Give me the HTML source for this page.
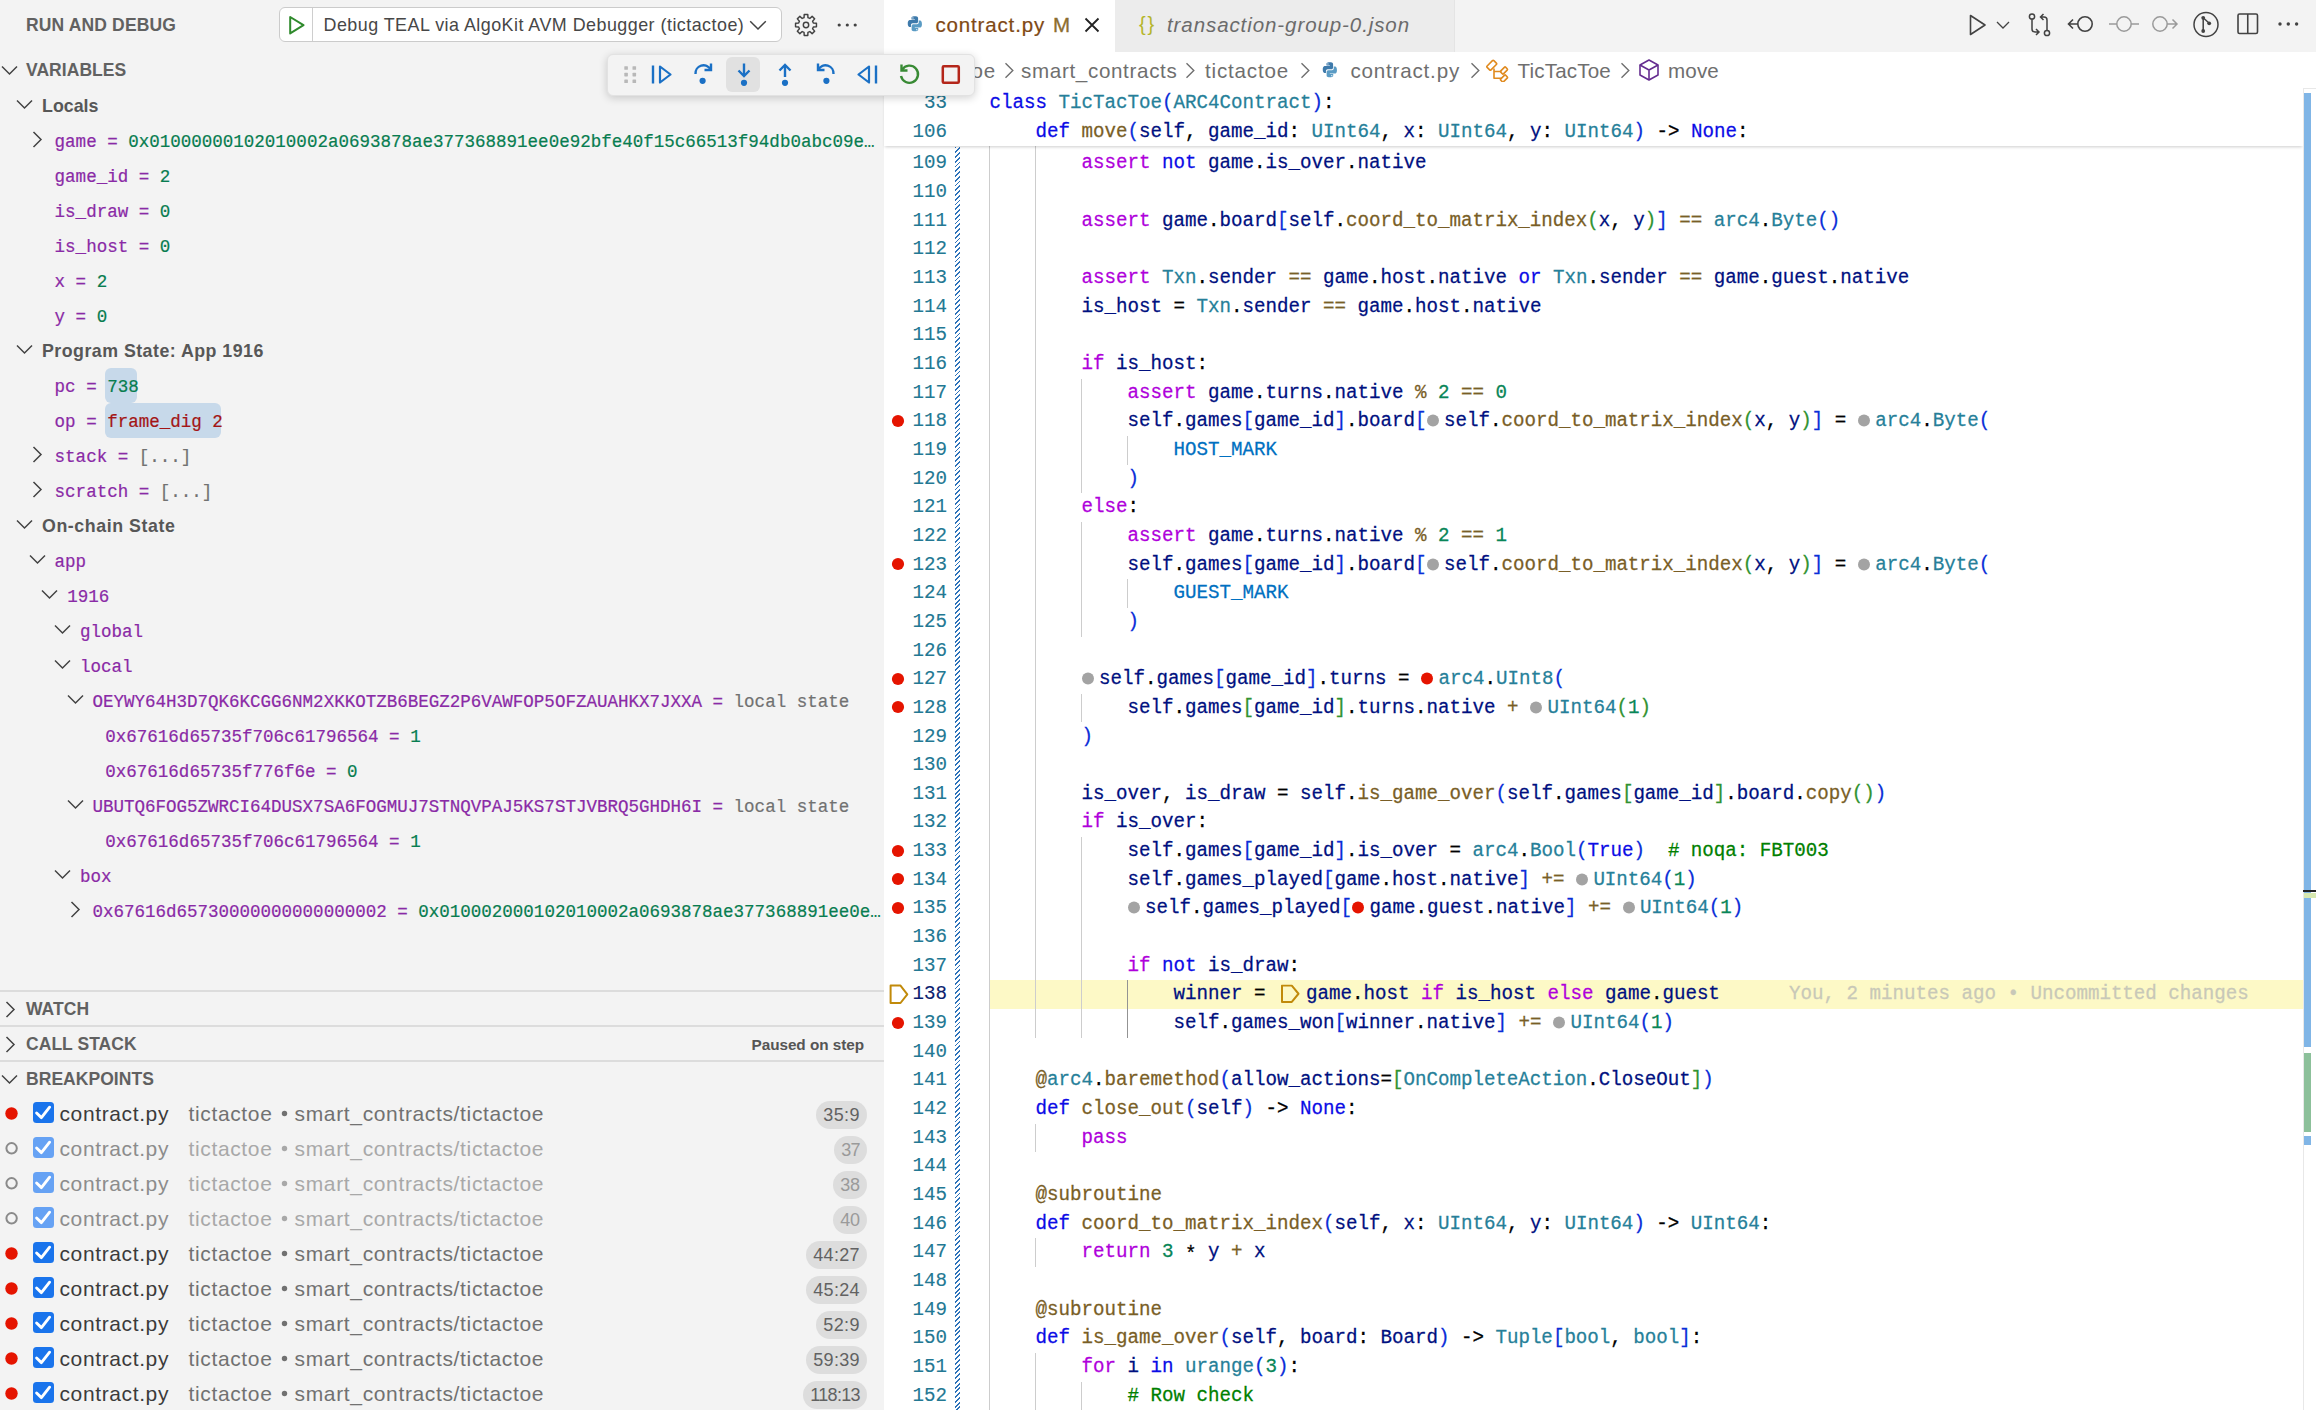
<!DOCTYPE html>
<html><head><meta charset="utf-8"><title>VS Code</title>
<style>
html,body{margin:0;padding:0;width:2316px;height:1410px;overflow:hidden;background:#fff}
.t,.b{position:absolute;white-space:pre;}
.t{margin:0}
.fs{font-family:"Liberation Sans", sans-serif}
.fm{font-family:"Liberation Mono", monospace;-webkit-text-stroke:0.2px currentColor}
.cl{-webkit-text-stroke:0.25px currentColor;position:absolute;white-space:pre;font-family:"Liberation Mono", monospace;font-size:19.17px;line-height:28.66px;height:28.66px;color:#000;transform:scaleY(1.1);transform-origin:0 19.43px}
.ln{-webkit-text-stroke:0.12px currentColor;position:absolute;white-space:pre;font-family:"Liberation Mono", monospace;font-size:19.17px;line-height:28.66px;height:28.66px;left:867px;width:80px;text-align:right;transform:scaleY(1.1);transform-origin:0 19.43px}
.cl .bpd::before{transform:scaleY(0.9091)}
.cl .frm svg{transform:scaleY(0.9091)}
.bpd{display:inline-block;width:17.5px;height:12px;position:relative;vertical-align:-1px}
.bpd::before{content:"";position:absolute;left:0.5px;top:0;width:12px;height:12px;border-radius:50%;background:#a3a3a3}
.bpd.r::before{background:#e51400}
.frm{display:inline-block;width:29px;height:20px;vertical-align:-4px;position:relative}
.frm svg{position:absolute;left:4px;top:1.5px}
</style></head><body>
<div class="b" style="left:0.00px;top:0.00px;width:884.00px;height:1410.00px;background:#f3f3f3"></div>
<div class="t fs " style="left:26.00px;top:12.64px;font-size:17.5px;line-height:24px;color:#616161;font-weight:bold;font-style:normal;letter-spacing:0.15px;">RUN AND DEBUG</div>
<div class="b" style="left:279.00px;top:7.00px;width:502.50px;height:35.00px;background:#fff;border:1.5px solid #cbcbcb;border-radius:6px;box-sizing:border-box"></div>
<div class="b" style="left:312.00px;top:8.00px;width:1.30px;height:33.00px;background:#cecece"></div>
<svg class="b" style="left:287.00px;top:14.00px;" width="20" height="22" viewBox="0 0 20 22"><path d="M3.2 3 L16.5 11.2 L3.2 19.4 Z" fill="none" stroke="#2f8a2c" stroke-width="2" stroke-linejoin="round"/></svg>
<div class="t fs " style="left:323.50px;top:13.30px;font-size:17.9px;line-height:25px;color:#474747;font-weight:normal;font-style:normal;letter-spacing:0.475px;">Debug TEAL via AlgoKit AVM Debugger (tictactoe)</div>
<svg class="b" style="left:748.00px;top:17.00px;" width="20" height="14" viewBox="0 0 20 14"><path d="M2.2 4.2 L10 12 L17.8 4.2" fill="none" stroke="#424242" stroke-width="1.5"/></svg>
<svg class="b" style="left:793.00px;top:11.50px;" width="26" height="26" viewBox="0 0 26 26"><g fill="none" stroke="#424242" stroke-width="1.45" stroke-linejoin="round"><circle cx="13" cy="13" r="2.7"/><path d="M20.34 11.05 L23.45 11.21 L23.45 14.79 L20.34 14.95 L19.57 16.81 L21.66 19.12 L19.12 21.66 L16.81 19.57 L14.95 20.34 L14.79 23.45 L11.21 23.45 L11.05 20.34 L9.19 19.57 L6.88 21.66 L4.34 19.12 L6.43 16.81 L5.66 14.95 L2.55 14.79 L2.55 11.21 L5.66 11.05 L6.43 9.19 L4.34 6.88 L6.88 4.34 L9.19 6.43 L11.05 5.66 L11.21 2.55 L14.79 2.55 L14.95 5.66 L16.81 6.43 L19.12 4.34 L21.66 6.88 L19.57 9.19 Z"/></g></svg>
<svg class="b" style="left:835.00px;top:20.50px;" width="24" height="8" viewBox="0 0 24 8"><g fill="#424242"><circle cx="4.2" cy="4" r="1.6"/><circle cx="12.3" cy="4" r="1.6"/><circle cx="20.2" cy="4" r="1.6"/></g></svg>
<svg class="b" style="left:1.00px;top:65.00px;" width="17" height="11" viewBox="0 0 17 11"><path d="M1 1.5 L8.5 9 L16 1.5" fill="none" stroke="#424242" stroke-width="1.5"/></svg>
<div class="t fs " style="left:26.00px;top:57.94px;font-size:17.5px;line-height:24px;color:#616161;font-weight:bold;font-style:normal;letter-spacing:0.05px;">VARIABLES</div>
<svg class="b" style="left:15.50px;top:99.00px;" width="17" height="11" viewBox="0 0 17 11"><path d="M1 1.5 L8.5 9 L16 1.5" fill="none" stroke="#424242" stroke-width="1.5"/></svg>
<div class="t fs " style="left:42.00px;top:93.83px;font-size:17.8px;line-height:25px;color:#575757;font-weight:bold;font-style:normal;letter-spacing:0.018px;">Locals</div>
<svg class="b" style="left:32.00px;top:131.00px;" width="11" height="17" viewBox="0 0 11 17"><path d="M1.5 1 L9 8.5 L1.5 16" fill="none" stroke="#424242" stroke-width="1.5"/></svg>
<div class="t fm " style="left:54.60px;top:129.64px;font-size:17.53px;line-height:25px;color:#333;font-weight:normal;font-style:normal;letter-spacing:0px;width:828.40px;overflow:hidden;transform:scaleY(1.1);transform-origin:0 17.16px;"><span style="color:#8a2aa6">game</span><span style="color:#8a2aa6"> = </span><span style="color:#087d50">0x01000000102010002a0693878ae377368891ee0e92bfe40f15c66513f94db0abc09e…</span></div>
<div class="t fm " style="left:54.60px;top:164.64px;font-size:17.53px;line-height:25px;color:#333;font-weight:normal;font-style:normal;letter-spacing:0px;transform:scaleY(1.1);transform-origin:0 17.16px;"><span style="color:#8a2aa6">game_id</span><span style="color:#8a2aa6"> = </span><span style="color:#087d50">2</span></div>
<div class="t fm " style="left:54.60px;top:199.64px;font-size:17.53px;line-height:25px;color:#333;font-weight:normal;font-style:normal;letter-spacing:0px;transform:scaleY(1.1);transform-origin:0 17.16px;"><span style="color:#8a2aa6">is_draw</span><span style="color:#8a2aa6"> = </span><span style="color:#087d50">0</span></div>
<div class="t fm " style="left:54.60px;top:234.64px;font-size:17.53px;line-height:25px;color:#333;font-weight:normal;font-style:normal;letter-spacing:0px;transform:scaleY(1.1);transform-origin:0 17.16px;"><span style="color:#8a2aa6">is_host</span><span style="color:#8a2aa6"> = </span><span style="color:#087d50">0</span></div>
<div class="t fm " style="left:54.60px;top:269.64px;font-size:17.53px;line-height:25px;color:#333;font-weight:normal;font-style:normal;letter-spacing:0px;transform:scaleY(1.1);transform-origin:0 17.16px;"><span style="color:#8a2aa6">x</span><span style="color:#8a2aa6"> = </span><span style="color:#087d50">2</span></div>
<div class="t fm " style="left:54.60px;top:304.64px;font-size:17.53px;line-height:25px;color:#333;font-weight:normal;font-style:normal;letter-spacing:0px;transform:scaleY(1.1);transform-origin:0 17.16px;"><span style="color:#8a2aa6">y</span><span style="color:#8a2aa6"> = </span><span style="color:#087d50">0</span></div>
<svg class="b" style="left:15.50px;top:344.00px;" width="17" height="11" viewBox="0 0 17 11"><path d="M1 1.5 L8.5 9 L16 1.5" fill="none" stroke="#424242" stroke-width="1.5"/></svg>
<div class="t fs " style="left:42.00px;top:338.83px;font-size:17.8px;line-height:25px;color:#575757;font-weight:bold;font-style:normal;letter-spacing:0.477px;">Program State: App 1916</div>
<div class="b" style="left:105.00px;top:368.00px;width:32.00px;height:35.00px;background:#c7d9ea;border-radius:6px"></div>
<div class="t fm " style="left:54.60px;top:374.64px;font-size:17.53px;line-height:25px;color:#333;font-weight:normal;font-style:normal;letter-spacing:0px;transform:scaleY(1.1);transform-origin:0 17.16px;"><span style="color:#8a2aa6">pc</span><span style="color:#8a2aa6"> = </span><span style="color:#087d50">738</span></div>
<div class="b" style="left:105.00px;top:403.00px;width:116.00px;height:35.00px;background:#c7d9ea;border-radius:6px"></div>
<div class="t fm " style="left:54.60px;top:409.64px;font-size:17.53px;line-height:25px;color:#333;font-weight:normal;font-style:normal;letter-spacing:0px;transform:scaleY(1.1);transform-origin:0 17.16px;"><span style="color:#8a2aa6">op</span><span style="color:#8a2aa6"> = </span><span style="color:#a31515">frame_dig 2</span></div>
<svg class="b" style="left:32.00px;top:446.00px;" width="11" height="17" viewBox="0 0 11 17"><path d="M1.5 1 L9 8.5 L1.5 16" fill="none" stroke="#424242" stroke-width="1.5"/></svg>
<div class="t fm " style="left:54.60px;top:444.64px;font-size:17.53px;line-height:25px;color:#333;font-weight:normal;font-style:normal;letter-spacing:0px;transform:scaleY(1.1);transform-origin:0 17.16px;"><span style="color:#8a2aa6">stack</span><span style="color:#8a2aa6"> = </span><span style="color:#717171">[...]</span></div>
<svg class="b" style="left:32.00px;top:481.00px;" width="11" height="17" viewBox="0 0 11 17"><path d="M1.5 1 L9 8.5 L1.5 16" fill="none" stroke="#424242" stroke-width="1.5"/></svg>
<div class="t fm " style="left:54.60px;top:479.64px;font-size:17.53px;line-height:25px;color:#333;font-weight:normal;font-style:normal;letter-spacing:0px;transform:scaleY(1.1);transform-origin:0 17.16px;"><span style="color:#8a2aa6">scratch</span><span style="color:#8a2aa6"> = </span><span style="color:#717171">[...]</span></div>
<svg class="b" style="left:15.50px;top:519.00px;" width="17" height="11" viewBox="0 0 17 11"><path d="M1 1.5 L8.5 9 L16 1.5" fill="none" stroke="#424242" stroke-width="1.5"/></svg>
<div class="t fs " style="left:42.00px;top:513.83px;font-size:17.8px;line-height:25px;color:#575757;font-weight:bold;font-style:normal;letter-spacing:0.563px;">On-chain State</div>
<svg class="b" style="left:28.50px;top:554.00px;" width="17" height="11" viewBox="0 0 17 11"><path d="M1 1.5 L8.5 9 L16 1.5" fill="none" stroke="#424242" stroke-width="1.5"/></svg>
<div class="t fm " style="left:54.60px;top:549.64px;font-size:17.53px;line-height:25px;color:#333;font-weight:normal;font-style:normal;letter-spacing:0px;transform:scaleY(1.1);transform-origin:0 17.16px;"><span style="color:#8a2aa6">app</span></div>
<svg class="b" style="left:41.20px;top:589.00px;" width="17" height="11" viewBox="0 0 17 11"><path d="M1 1.5 L8.5 9 L16 1.5" fill="none" stroke="#424242" stroke-width="1.5"/></svg>
<div class="t fm " style="left:67.30px;top:584.64px;font-size:17.53px;line-height:25px;color:#333;font-weight:normal;font-style:normal;letter-spacing:0px;transform:scaleY(1.1);transform-origin:0 17.16px;"><span style="color:#8a2aa6">1916</span></div>
<svg class="b" style="left:53.90px;top:624.00px;" width="17" height="11" viewBox="0 0 17 11"><path d="M1 1.5 L8.5 9 L16 1.5" fill="none" stroke="#424242" stroke-width="1.5"/></svg>
<div class="t fm " style="left:80.00px;top:619.64px;font-size:17.53px;line-height:25px;color:#333;font-weight:normal;font-style:normal;letter-spacing:0px;transform:scaleY(1.1);transform-origin:0 17.16px;"><span style="color:#8a2aa6">global</span></div>
<svg class="b" style="left:53.90px;top:659.00px;" width="17" height="11" viewBox="0 0 17 11"><path d="M1 1.5 L8.5 9 L16 1.5" fill="none" stroke="#424242" stroke-width="1.5"/></svg>
<div class="t fm " style="left:80.00px;top:654.64px;font-size:17.53px;line-height:25px;color:#333;font-weight:normal;font-style:normal;letter-spacing:0px;transform:scaleY(1.1);transform-origin:0 17.16px;"><span style="color:#8a2aa6">local</span></div>
<svg class="b" style="left:66.60px;top:694.00px;" width="17" height="11" viewBox="0 0 17 11"><path d="M1 1.5 L8.5 9 L16 1.5" fill="none" stroke="#424242" stroke-width="1.5"/></svg>
<div class="t fm " style="left:92.40px;top:689.64px;font-size:17.53px;line-height:25px;color:#333;font-weight:normal;font-style:normal;letter-spacing:0px;transform:scaleY(1.1);transform-origin:0 17.16px;"><span style="color:#8a2aa6">OEYWY64H3D7QK6KCGG6NM2XKKOTZB6BEGZ2P6VAWFOP5OFZAUAHKX7JXXA</span><span style="color:#8a2aa6"> = </span><span style="color:#717171">local state</span></div>
<div class="t fm " style="left:105.30px;top:724.64px;font-size:17.53px;line-height:25px;color:#333;font-weight:normal;font-style:normal;letter-spacing:0px;transform:scaleY(1.1);transform-origin:0 17.16px;"><span style="color:#8a2aa6">0x67616d65735f706c61796564</span><span style="color:#8a2aa6"> = </span><span style="color:#087d50">1</span></div>
<div class="t fm " style="left:105.30px;top:759.64px;font-size:17.53px;line-height:25px;color:#333;font-weight:normal;font-style:normal;letter-spacing:0px;transform:scaleY(1.1);transform-origin:0 17.16px;"><span style="color:#8a2aa6">0x67616d65735f776f6e</span><span style="color:#8a2aa6"> = </span><span style="color:#087d50">0</span></div>
<svg class="b" style="left:66.60px;top:799.00px;" width="17" height="11" viewBox="0 0 17 11"><path d="M1 1.5 L8.5 9 L16 1.5" fill="none" stroke="#424242" stroke-width="1.5"/></svg>
<div class="t fm " style="left:92.40px;top:794.64px;font-size:17.53px;line-height:25px;color:#333;font-weight:normal;font-style:normal;letter-spacing:0px;transform:scaleY(1.1);transform-origin:0 17.16px;"><span style="color:#8a2aa6">UBUTQ6FOG5ZWRCI64DUSX7SA6FOGMUJ7STNQVPAJ5KS7STJVBRQ5GHDH6I</span><span style="color:#8a2aa6"> = </span><span style="color:#717171">local state</span></div>
<div class="t fm " style="left:105.30px;top:829.64px;font-size:17.53px;line-height:25px;color:#333;font-weight:normal;font-style:normal;letter-spacing:0px;transform:scaleY(1.1);transform-origin:0 17.16px;"><span style="color:#8a2aa6">0x67616d65735f706c61796564</span><span style="color:#8a2aa6"> = </span><span style="color:#087d50">1</span></div>
<svg class="b" style="left:53.90px;top:869.00px;" width="17" height="11" viewBox="0 0 17 11"><path d="M1 1.5 L8.5 9 L16 1.5" fill="none" stroke="#424242" stroke-width="1.5"/></svg>
<div class="t fm " style="left:80.00px;top:864.64px;font-size:17.53px;line-height:25px;color:#333;font-weight:normal;font-style:normal;letter-spacing:0px;transform:scaleY(1.1);transform-origin:0 17.16px;"><span style="color:#8a2aa6">box</span></div>
<svg class="b" style="left:70.00px;top:901.00px;" width="11" height="17" viewBox="0 0 11 17"><path d="M1.5 1 L9 8.5 L1.5 16" fill="none" stroke="#424242" stroke-width="1.5"/></svg>
<div class="t fm " style="left:92.40px;top:899.64px;font-size:17.53px;line-height:25px;color:#333;font-weight:normal;font-style:normal;letter-spacing:0px;width:790.60px;overflow:hidden;transform:scaleY(1.1);transform-origin:0 17.16px;"><span style="color:#8a2aa6">0x67616d65730000000000000002</span><span style="color:#8a2aa6"> = </span><span style="color:#087d50">0x010002000102010002a0693878ae377368891ee0e…</span></div>
<div class="b" style="left:0.00px;top:990.40px;width:884.00px;height:1.30px;background:#dcdcdc"></div>
<div class="b" style="left:0.00px;top:1025.40px;width:884.00px;height:1.30px;background:#dcdcdc"></div>
<div class="b" style="left:0.00px;top:1060.40px;width:884.00px;height:1.30px;background:#dcdcdc"></div>
<svg class="b" style="left:5.00px;top:1000.50px;" width="11" height="17" viewBox="0 0 11 17"><path d="M1.5 1 L9 8.5 L1.5 16" fill="none" stroke="#424242" stroke-width="1.5"/></svg>
<div class="t fs " style="left:26.00px;top:997.04px;font-size:17.5px;line-height:24px;color:#616161;font-weight:bold;font-style:normal;letter-spacing:0.05px;">WATCH</div>
<svg class="b" style="left:5.00px;top:1035.50px;" width="11" height="17" viewBox="0 0 11 17"><path d="M1.5 1 L9 8.5 L1.5 16" fill="none" stroke="#424242" stroke-width="1.5"/></svg>
<div class="t fs " style="left:26.00px;top:1032.14px;font-size:17.5px;line-height:24px;color:#616161;font-weight:bold;font-style:normal;letter-spacing:0.05px;">CALL STACK</div>
<div class="t fs " style="left:751.50px;top:1034.00px;font-size:15.3px;line-height:21px;color:#555;font-weight:bold;font-style:normal;letter-spacing:-0.041px;">Paused on step</div>
<svg class="b" style="left:1.00px;top:1074.00px;" width="17" height="11" viewBox="0 0 17 11"><path d="M1 1.5 L8.5 9 L16 1.5" fill="none" stroke="#424242" stroke-width="1.5"/></svg>
<div class="t fs " style="left:26.00px;top:1066.74px;font-size:17.5px;line-height:24px;color:#616161;font-weight:bold;font-style:normal;letter-spacing:0.05px;">BREAKPOINTS</div>
<svg class="b" style="left:4.00px;top:1105.50px;" width="15" height="15" viewBox="0 0 15 15"><circle cx="7.5" cy="7.5" r="6.2" fill="#e51400"/></svg>
<div class="b" style="left:33.00px;top:1102.30px;width:20.50px;height:20.50px;background:#1a74ec;border-radius:3.5px"></div>
<svg class="b" style="left:33.00px;top:1102.30px;" width="21" height="21" viewBox="0 0 21 21"><path d="M3.6 11 L8.4 15.6 L16.6 5.2" fill="none" stroke="#fff" stroke-width="2.9" stroke-linecap="round" stroke-linejoin="round"/></svg>
<div class="t fs " style="left:59.50px;top:1099.22px;font-size:21px;line-height:29px;color:#3b3b3b;font-weight:normal;font-style:normal;letter-spacing:0.617px;">contract.py</div>
<div class="t fs " style="left:188.50px;top:1099.22px;font-size:21px;line-height:29px;color:#717171;font-weight:normal;font-style:normal;letter-spacing:0.643px;">tictactoe</div>
<svg class="b" style="left:280.50px;top:1109.50px;" width="7" height="7" viewBox="0 0 7 7"><circle cx="3.5" cy="3.5" r="2.7" fill="#717171"/></svg>
<div class="t fs " style="left:294.60px;top:1099.22px;font-size:21px;line-height:29px;color:#717171;font-weight:normal;font-style:normal;letter-spacing:0.643px;">smart_contracts/tictactoe</div>
<div class="b" style="left:815.80px;top:1101.20px;width:51.00px;height:28.30px;background:#dddddd;border-radius:14px"></div>
<div class="t fs " style="left:823.30px;top:1102.86px;font-size:18px;line-height:25px;color:#626262;font-weight:normal;font-style:normal;letter-spacing:0.366px;">35:9</div>
<svg class="b" style="left:4.00px;top:1140.50px;" width="15" height="15" viewBox="0 0 15 15"><circle cx="7.6" cy="7.3" r="5.2" fill="none" stroke="#8a8a8a" stroke-width="2"/></svg>
<div class="b" style="left:33.00px;top:1137.30px;width:20.50px;height:20.50px;background:#66a2f4;border-radius:3.5px"></div>
<svg class="b" style="left:33.00px;top:1137.30px;" width="21" height="21" viewBox="0 0 21 21"><path d="M3.6 11 L8.4 15.6 L16.6 5.2" fill="none" stroke="#fff" stroke-width="2.9" stroke-linecap="round" stroke-linejoin="round"/></svg>
<div class="t fs " style="left:59.50px;top:1134.22px;font-size:21px;line-height:29px;color:#8c8c8c;font-weight:normal;font-style:normal;letter-spacing:0.617px;">contract.py</div>
<div class="t fs " style="left:188.50px;top:1134.22px;font-size:21px;line-height:29px;color:#a8a8a8;font-weight:normal;font-style:normal;letter-spacing:0.643px;">tictactoe</div>
<svg class="b" style="left:280.50px;top:1144.50px;" width="7" height="7" viewBox="0 0 7 7"><circle cx="3.5" cy="3.5" r="2.7" fill="#a8a8a8"/></svg>
<div class="t fs " style="left:294.60px;top:1134.22px;font-size:21px;line-height:29px;color:#a8a8a8;font-weight:normal;font-style:normal;letter-spacing:0.643px;">smart_contracts/tictactoe</div>
<div class="b" style="left:833.80px;top:1136.20px;width:33.00px;height:28.30px;background:#dddddd;border-radius:14px"></div>
<div class="t fs " style="left:841.30px;top:1137.86px;font-size:18px;line-height:25px;color:#9a9a9a;font-weight:normal;font-style:normal;letter-spacing:-0.761px;">37</div>
<svg class="b" style="left:4.00px;top:1175.50px;" width="15" height="15" viewBox="0 0 15 15"><circle cx="7.6" cy="7.3" r="5.2" fill="none" stroke="#8a8a8a" stroke-width="2"/></svg>
<div class="b" style="left:33.00px;top:1172.30px;width:20.50px;height:20.50px;background:#66a2f4;border-radius:3.5px"></div>
<svg class="b" style="left:33.00px;top:1172.30px;" width="21" height="21" viewBox="0 0 21 21"><path d="M3.6 11 L8.4 15.6 L16.6 5.2" fill="none" stroke="#fff" stroke-width="2.9" stroke-linecap="round" stroke-linejoin="round"/></svg>
<div class="t fs " style="left:59.50px;top:1169.22px;font-size:21px;line-height:29px;color:#8c8c8c;font-weight:normal;font-style:normal;letter-spacing:0.617px;">contract.py</div>
<div class="t fs " style="left:188.50px;top:1169.22px;font-size:21px;line-height:29px;color:#a8a8a8;font-weight:normal;font-style:normal;letter-spacing:0.643px;">tictactoe</div>
<svg class="b" style="left:280.50px;top:1179.50px;" width="7" height="7" viewBox="0 0 7 7"><circle cx="3.5" cy="3.5" r="2.7" fill="#a8a8a8"/></svg>
<div class="t fs " style="left:294.60px;top:1169.22px;font-size:21px;line-height:29px;color:#a8a8a8;font-weight:normal;font-style:normal;letter-spacing:0.643px;">smart_contracts/tictactoe</div>
<div class="b" style="left:832.80px;top:1171.20px;width:34.00px;height:28.30px;background:#dddddd;border-radius:14px"></div>
<div class="t fs " style="left:840.30px;top:1172.86px;font-size:18px;line-height:25px;color:#9a9a9a;font-weight:normal;font-style:normal;letter-spacing:-0.261px;">38</div>
<svg class="b" style="left:4.00px;top:1210.50px;" width="15" height="15" viewBox="0 0 15 15"><circle cx="7.6" cy="7.3" r="5.2" fill="none" stroke="#8a8a8a" stroke-width="2"/></svg>
<div class="b" style="left:33.00px;top:1207.30px;width:20.50px;height:20.50px;background:#66a2f4;border-radius:3.5px"></div>
<svg class="b" style="left:33.00px;top:1207.30px;" width="21" height="21" viewBox="0 0 21 21"><path d="M3.6 11 L8.4 15.6 L16.6 5.2" fill="none" stroke="#fff" stroke-width="2.9" stroke-linecap="round" stroke-linejoin="round"/></svg>
<div class="t fs " style="left:59.50px;top:1204.22px;font-size:21px;line-height:29px;color:#8c8c8c;font-weight:normal;font-style:normal;letter-spacing:0.617px;">contract.py</div>
<div class="t fs " style="left:188.50px;top:1204.22px;font-size:21px;line-height:29px;color:#a8a8a8;font-weight:normal;font-style:normal;letter-spacing:0.643px;">tictactoe</div>
<svg class="b" style="left:280.50px;top:1214.50px;" width="7" height="7" viewBox="0 0 7 7"><circle cx="3.5" cy="3.5" r="2.7" fill="#a8a8a8"/></svg>
<div class="t fs " style="left:294.60px;top:1204.22px;font-size:21px;line-height:29px;color:#a8a8a8;font-weight:normal;font-style:normal;letter-spacing:0.643px;">smart_contracts/tictactoe</div>
<div class="b" style="left:832.80px;top:1206.20px;width:34.00px;height:28.30px;background:#dddddd;border-radius:14px"></div>
<div class="t fs " style="left:840.30px;top:1207.86px;font-size:18px;line-height:25px;color:#9a9a9a;font-weight:normal;font-style:normal;letter-spacing:-0.261px;">40</div>
<svg class="b" style="left:4.00px;top:1245.50px;" width="15" height="15" viewBox="0 0 15 15"><circle cx="7.5" cy="7.5" r="6.2" fill="#e51400"/></svg>
<div class="b" style="left:33.00px;top:1242.30px;width:20.50px;height:20.50px;background:#1a74ec;border-radius:3.5px"></div>
<svg class="b" style="left:33.00px;top:1242.30px;" width="21" height="21" viewBox="0 0 21 21"><path d="M3.6 11 L8.4 15.6 L16.6 5.2" fill="none" stroke="#fff" stroke-width="2.9" stroke-linecap="round" stroke-linejoin="round"/></svg>
<div class="t fs " style="left:59.50px;top:1239.22px;font-size:21px;line-height:29px;color:#3b3b3b;font-weight:normal;font-style:normal;letter-spacing:0.617px;">contract.py</div>
<div class="t fs " style="left:188.50px;top:1239.22px;font-size:21px;line-height:29px;color:#717171;font-weight:normal;font-style:normal;letter-spacing:0.643px;">tictactoe</div>
<svg class="b" style="left:280.50px;top:1249.50px;" width="7" height="7" viewBox="0 0 7 7"><circle cx="3.5" cy="3.5" r="2.7" fill="#717171"/></svg>
<div class="t fs " style="left:294.60px;top:1239.22px;font-size:21px;line-height:29px;color:#717171;font-weight:normal;font-style:normal;letter-spacing:0.643px;">smart_contracts/tictactoe</div>
<div class="b" style="left:805.80px;top:1241.20px;width:61.00px;height:28.30px;background:#dddddd;border-radius:14px"></div>
<div class="t fs " style="left:813.30px;top:1242.86px;font-size:18px;line-height:25px;color:#626262;font-weight:normal;font-style:normal;letter-spacing:0.291px;">44:27</div>
<svg class="b" style="left:4.00px;top:1280.50px;" width="15" height="15" viewBox="0 0 15 15"><circle cx="7.5" cy="7.5" r="6.2" fill="#e51400"/></svg>
<div class="b" style="left:33.00px;top:1277.30px;width:20.50px;height:20.50px;background:#1a74ec;border-radius:3.5px"></div>
<svg class="b" style="left:33.00px;top:1277.30px;" width="21" height="21" viewBox="0 0 21 21"><path d="M3.6 11 L8.4 15.6 L16.6 5.2" fill="none" stroke="#fff" stroke-width="2.9" stroke-linecap="round" stroke-linejoin="round"/></svg>
<div class="t fs " style="left:59.50px;top:1274.22px;font-size:21px;line-height:29px;color:#3b3b3b;font-weight:normal;font-style:normal;letter-spacing:0.617px;">contract.py</div>
<div class="t fs " style="left:188.50px;top:1274.22px;font-size:21px;line-height:29px;color:#717171;font-weight:normal;font-style:normal;letter-spacing:0.643px;">tictactoe</div>
<svg class="b" style="left:280.50px;top:1284.50px;" width="7" height="7" viewBox="0 0 7 7"><circle cx="3.5" cy="3.5" r="2.7" fill="#717171"/></svg>
<div class="t fs " style="left:294.60px;top:1274.22px;font-size:21px;line-height:29px;color:#717171;font-weight:normal;font-style:normal;letter-spacing:0.643px;">smart_contracts/tictactoe</div>
<div class="b" style="left:805.80px;top:1276.20px;width:61.00px;height:28.30px;background:#dddddd;border-radius:14px"></div>
<div class="t fs " style="left:813.30px;top:1277.86px;font-size:18px;line-height:25px;color:#626262;font-weight:normal;font-style:normal;letter-spacing:0.291px;">45:24</div>
<svg class="b" style="left:4.00px;top:1315.50px;" width="15" height="15" viewBox="0 0 15 15"><circle cx="7.5" cy="7.5" r="6.2" fill="#e51400"/></svg>
<div class="b" style="left:33.00px;top:1312.30px;width:20.50px;height:20.50px;background:#1a74ec;border-radius:3.5px"></div>
<svg class="b" style="left:33.00px;top:1312.30px;" width="21" height="21" viewBox="0 0 21 21"><path d="M3.6 11 L8.4 15.6 L16.6 5.2" fill="none" stroke="#fff" stroke-width="2.9" stroke-linecap="round" stroke-linejoin="round"/></svg>
<div class="t fs " style="left:59.50px;top:1309.22px;font-size:21px;line-height:29px;color:#3b3b3b;font-weight:normal;font-style:normal;letter-spacing:0.617px;">contract.py</div>
<div class="t fs " style="left:188.50px;top:1309.22px;font-size:21px;line-height:29px;color:#717171;font-weight:normal;font-style:normal;letter-spacing:0.643px;">tictactoe</div>
<svg class="b" style="left:280.50px;top:1319.50px;" width="7" height="7" viewBox="0 0 7 7"><circle cx="3.5" cy="3.5" r="2.7" fill="#717171"/></svg>
<div class="t fs " style="left:294.60px;top:1309.22px;font-size:21px;line-height:29px;color:#717171;font-weight:normal;font-style:normal;letter-spacing:0.643px;">smart_contracts/tictactoe</div>
<div class="b" style="left:815.80px;top:1311.20px;width:51.00px;height:28.30px;background:#dddddd;border-radius:14px"></div>
<div class="t fs " style="left:823.30px;top:1312.86px;font-size:18px;line-height:25px;color:#626262;font-weight:normal;font-style:normal;letter-spacing:0.366px;">52:9</div>
<svg class="b" style="left:4.00px;top:1350.50px;" width="15" height="15" viewBox="0 0 15 15"><circle cx="7.5" cy="7.5" r="6.2" fill="#e51400"/></svg>
<div class="b" style="left:33.00px;top:1347.30px;width:20.50px;height:20.50px;background:#1a74ec;border-radius:3.5px"></div>
<svg class="b" style="left:33.00px;top:1347.30px;" width="21" height="21" viewBox="0 0 21 21"><path d="M3.6 11 L8.4 15.6 L16.6 5.2" fill="none" stroke="#fff" stroke-width="2.9" stroke-linecap="round" stroke-linejoin="round"/></svg>
<div class="t fs " style="left:59.50px;top:1344.22px;font-size:21px;line-height:29px;color:#3b3b3b;font-weight:normal;font-style:normal;letter-spacing:0.617px;">contract.py</div>
<div class="t fs " style="left:188.50px;top:1344.22px;font-size:21px;line-height:29px;color:#717171;font-weight:normal;font-style:normal;letter-spacing:0.643px;">tictactoe</div>
<svg class="b" style="left:280.50px;top:1354.50px;" width="7" height="7" viewBox="0 0 7 7"><circle cx="3.5" cy="3.5" r="2.7" fill="#717171"/></svg>
<div class="t fs " style="left:294.60px;top:1344.22px;font-size:21px;line-height:29px;color:#717171;font-weight:normal;font-style:normal;letter-spacing:0.643px;">smart_contracts/tictactoe</div>
<div class="b" style="left:805.80px;top:1346.20px;width:61.00px;height:28.30px;background:#dddddd;border-radius:14px"></div>
<div class="t fs " style="left:813.30px;top:1347.86px;font-size:18px;line-height:25px;color:#626262;font-weight:normal;font-style:normal;letter-spacing:0.291px;">59:39</div>
<svg class="b" style="left:4.00px;top:1385.50px;" width="15" height="15" viewBox="0 0 15 15"><circle cx="7.5" cy="7.5" r="6.2" fill="#e51400"/></svg>
<div class="b" style="left:33.00px;top:1382.30px;width:20.50px;height:20.50px;background:#1a74ec;border-radius:3.5px"></div>
<svg class="b" style="left:33.00px;top:1382.30px;" width="21" height="21" viewBox="0 0 21 21"><path d="M3.6 11 L8.4 15.6 L16.6 5.2" fill="none" stroke="#fff" stroke-width="2.9" stroke-linecap="round" stroke-linejoin="round"/></svg>
<div class="t fs " style="left:59.50px;top:1379.22px;font-size:21px;line-height:29px;color:#3b3b3b;font-weight:normal;font-style:normal;letter-spacing:0.617px;">contract.py</div>
<div class="t fs " style="left:188.50px;top:1379.22px;font-size:21px;line-height:29px;color:#717171;font-weight:normal;font-style:normal;letter-spacing:0.643px;">tictactoe</div>
<svg class="b" style="left:280.50px;top:1389.50px;" width="7" height="7" viewBox="0 0 7 7"><circle cx="3.5" cy="3.5" r="2.7" fill="#717171"/></svg>
<div class="t fs " style="left:294.60px;top:1379.22px;font-size:21px;line-height:29px;color:#717171;font-weight:normal;font-style:normal;letter-spacing:0.643px;">smart_contracts/tictactoe</div>
<div class="b" style="left:802.80px;top:1381.20px;width:64.00px;height:28.30px;background:#dddddd;border-radius:14px"></div>
<div class="t fs " style="left:810.30px;top:1382.86px;font-size:18px;line-height:25px;color:#626262;font-weight:normal;font-style:normal;letter-spacing:-0.703px;">118:13</div>
<div class="b" style="left:884.00px;top:0.00px;width:1432.00px;height:1410.00px;background:#ffffff"></div>
<div class="b" style="left:884.00px;top:0.00px;width:1432.00px;height:52.00px;background:#f3f3f3"></div>
<div class="b" style="left:884.00px;top:0.00px;width:231.00px;height:52.00px;background:#ffffff"></div>
<div class="b" style="left:1115.00px;top:0.00px;width:340.00px;height:52.00px;background:#ececec;border-right:1px solid #e4e4e4;box-sizing:border-box"></div>
<svg class="b" style="left:906.00px;top:15.00px;" width="18" height="18" viewBox="0 0 18 18"><g transform="scale(1.1)"><g><path d="M8 1.2c-3.2 0-3 1.4-3 1.4v1.5h3.1v.5H3.7S1.6 4.4 1.6 7.7s1.8 3.2 1.8 3.2h1.1V9.4s-.1-1.8 1.8-1.8h3s1.7 0 1.7-1.7V2.9S11.3 1.2 8 1.2z" fill="#3e7aab"/><path d="M8.1 14.8c3.2 0 3-1.4 3-1.4v-1.5H8v-.5h4.4s2.1.2 2.1-3.1-1.8-3.2-1.8-3.2h-1.1v1.5s.1 1.8-1.8 1.8h-3S5.1 8.4 5.1 10.1v3s-.3 1.7 3 1.7z" fill="#5a9bc4"/><circle cx="6.3" cy="2.7" r=".55" fill="#fff"/><circle cx="9.8" cy="13.3" r=".55" fill="#fff"/></g></g></svg>
<div class="t fs " style="left:935.50px;top:10.40px;font-size:20.5px;line-height:29px;color:#7f4915;font-weight:normal;font-style:normal;letter-spacing:0.839px;-webkit-text-stroke:0.2px currentColor;">contract.py</div>
<div class="t fs " style="left:1053.00px;top:10.40px;font-size:20.5px;line-height:29px;color:#8d6d2f;font-weight:normal;font-style:normal;letter-spacing:-0.577px;-webkit-text-stroke:0.35px currentColor;">M</div>
<svg class="b" style="left:1084.00px;top:17.00px;" width="16" height="16" viewBox="0 0 16 16"><path d="M1.5 1.5 L14.5 14.5 M14.5 1.5 L1.5 14.5" stroke="#222" stroke-width="1.8"/></svg>
<div class="t fs " style="left:1139.00px;top:10.07px;font-size:20px;line-height:28px;color:#b5b52a;font-weight:normal;font-style:normal;letter-spacing:1.82px;">{}</div>
<div class="t fs " style="left:1167.00px;top:10.40px;font-size:20.5px;line-height:29px;color:#6b6b6b;font-weight:normal;font-style:italic;letter-spacing:0.914px;">transaction-group-0.json</div>
<svg class="b" style="left:1968.00px;top:13.00px;" width="20" height="24" viewBox="0 0 20 24"><path d="M2.5 2.5 L17 12 L2.5 21.5 Z" fill="none" stroke="#424242" stroke-width="1.6" stroke-linejoin="round"/></svg>
<svg class="b" style="left:1996.00px;top:21.00px;" width="14" height="8" viewBox="0 0 14 8"><path d="M1 1 L7 7 L13 1" fill="none" stroke="#424242" stroke-width="1.3"/></svg>
<svg class="b" style="left:2027.00px;top:12.00px;" width="26" height="26" viewBox="0 0 26 26"><g fill="none" stroke="#424242" stroke-width="1.5"><circle cx="5" cy="4.5" r="2.6"/><circle cx="20" cy="21" r="2.6"/><path d="M5 7.1 V17 q0 3 3 3 H11 M9 17 L12 20 L9 23"/><path d="M20 18.4 V8 q0-3-3-3 H13.5 M16.5 2 L13.5 5 L16.5 8"/></g></svg>
<svg class="b" style="left:2066.00px;top:14.00px;" width="30" height="20" viewBox="0 0 30 20"><g fill="none" stroke="#424242" stroke-width="1.6"><circle cx="19" cy="10" r="7.2"/><path d="M11.8 10 H2.5 M7 5.5 L2.5 10 L7 14.5"/></g></svg>
<svg class="b" style="left:2108.00px;top:14.00px;" width="32" height="20" viewBox="0 0 32 20"><g fill="none" stroke="#9a9a9a" stroke-width="1.5"><circle cx="16" cy="10" r="7.2"/><path d="M1 10 H8.8 M23.2 10 H31"/></g></svg>
<svg class="b" style="left:2150.00px;top:14.00px;" width="30" height="20" viewBox="0 0 30 20"><g fill="none" stroke="#9a9a9a" stroke-width="1.5"><circle cx="10" cy="10" r="7.2"/><path d="M17.2 10 H27 M22.5 5.5 L27 10 L22.5 14.5"/></g></svg>
<svg class="b" style="left:2192.00px;top:11.00px;" width="28" height="28" viewBox="0 0 28 28"><g fill="none" stroke="#424242" stroke-width="1.5"><circle cx="14" cy="13.5" r="12"/></g><g fill="#424242"><circle cx="11.2" cy="6.8" r="1.9"/><circle cx="11.2" cy="20" r="1.9"/><circle cx="17.2" cy="12.3" r="1.9"/></g><path d="M11.2 6.8 V20 M11.2 6.8 L17.2 12.3" stroke="#424242" stroke-width="1.5"/></svg>
<svg class="b" style="left:2237.00px;top:13.00px;" width="22" height="22" viewBox="0 0 22 22"><g fill="none" stroke="#424242" stroke-width="1.6"><rect x="1" y="1" width="19.5" height="19.5" rx="1.5"/><path d="M10.75 1 V20.5"/></g></svg>
<svg class="b" style="left:2276.00px;top:20.00px;" width="24" height="8" viewBox="0 0 24 8"><g fill="#424242"><circle cx="4" cy="4" r="1.7"/><circle cx="12.3" cy="4" r="1.7"/><circle cx="20.6" cy="4" r="1.7"/></g></svg>
<div class="b" style="left:989.00px;top:980.44px;width:1314.00px;height:28.66px;background:#fdf9c6"></div>
<div class="b" style="left:988.70px;top:145.50px;width:1.60px;height:1264.84px;background:#cdcdcd"></div>
<div class="b" style="left:1034.70px;top:145.50px;width:1.60px;height:892.26px;background:#cdcdcd"></div>
<div class="b" style="left:1080.70px;top:378.58px;width:1.60px;height:114.64px;background:#cdcdcd"></div>
<div class="b" style="left:1126.70px;top:435.90px;width:1.60px;height:28.66px;background:#cdcdcd"></div>
<div class="b" style="left:1080.70px;top:521.88px;width:1.60px;height:114.64px;background:#cdcdcd"></div>
<div class="b" style="left:1126.70px;top:579.20px;width:1.60px;height:28.66px;background:#cdcdcd"></div>
<div class="b" style="left:1080.70px;top:693.84px;width:1.60px;height:28.66px;background:#cdcdcd"></div>
<div class="b" style="left:1080.70px;top:837.14px;width:1.60px;height:200.62px;background:#cdcdcd"></div>
<div class="b" style="left:1126.70px;top:980.44px;width:1.60px;height:57.32px;background:#939393"></div>
<div class="b" style="left:1034.70px;top:1123.74px;width:1.60px;height:28.66px;background:#cdcdcd"></div>
<div class="b" style="left:1034.70px;top:1238.38px;width:1.60px;height:28.66px;background:#cdcdcd"></div>
<div class="b" style="left:1034.70px;top:1353.02px;width:1.60px;height:57.32px;background:#cdcdcd"></div>
<div class="b" style="left:1080.70px;top:1381.68px;width:1.60px;height:28.66px;background:#cdcdcd"></div>
<div class="cl" style="top:149.30px;left:1081.50px"><span style="color:#af00db">assert</span><span style="color:#000000"> </span><span style="color:#0b0be6">not</span><span style="color:#001080"> game</span><span style="color:#000000">.</span><span style="color:#001080">is_over</span><span style="color:#000000">.</span><span style="color:#001080">native</span></div>
<div class="cl" style="top:177.96px;left:989.50px"></div>
<div class="cl" style="top:206.62px;left:1081.50px"><span style="color:#af00db">assert</span><span style="color:#001080"> game</span><span style="color:#000000">.</span><span style="color:#001080">board</span><span style="color:#0a2ed8">[</span><span style="color:#001080">self</span><span style="color:#000000">.</span><span style="color:#795e26">coord_to_matrix_index</span><span style="color:#319331">(</span><span style="color:#001080">x</span><span style="color:#000000">, </span><span style="color:#001080">y</span><span style="color:#319331">)</span><span style="color:#0a2ed8">]</span><span style="color:#795e26"> == </span><span style="color:#267f99">arc4</span><span style="color:#000000">.</span><span style="color:#267f99">Byte</span><span style="color:#0a2ed8">()</span></div>
<div class="cl" style="top:235.28px;left:989.50px"></div>
<div class="cl" style="top:263.94px;left:1081.50px"><span style="color:#af00db">assert</span><span style="color:#000000"> </span><span style="color:#267f99">Txn</span><span style="color:#000000">.</span><span style="color:#001080">sender</span><span style="color:#795e26"> == </span><span style="color:#001080">game</span><span style="color:#000000">.</span><span style="color:#001080">host</span><span style="color:#000000">.</span><span style="color:#001080">native</span><span style="color:#0b0be6"> or </span><span style="color:#267f99">Txn</span><span style="color:#000000">.</span><span style="color:#001080">sender</span><span style="color:#795e26"> == </span><span style="color:#001080">game</span><span style="color:#000000">.</span><span style="color:#001080">guest</span><span style="color:#000000">.</span><span style="color:#001080">native</span></div>
<div class="cl" style="top:292.60px;left:1081.50px"><span style="color:#001080">is_host</span><span style="color:#000000"> = </span><span style="color:#267f99">Txn</span><span style="color:#000000">.</span><span style="color:#001080">sender</span><span style="color:#795e26"> == </span><span style="color:#001080">game</span><span style="color:#000000">.</span><span style="color:#001080">host</span><span style="color:#000000">.</span><span style="color:#001080">native</span></div>
<div class="cl" style="top:321.26px;left:989.50px"></div>
<div class="cl" style="top:349.92px;left:1081.50px"><span style="color:#af00db">if</span><span style="color:#001080"> is_host</span><span style="color:#000000">:</span></div>
<div class="cl" style="top:378.58px;left:1127.50px"><span style="color:#af00db">assert</span><span style="color:#001080"> game</span><span style="color:#000000">.</span><span style="color:#001080">turns</span><span style="color:#000000">.</span><span style="color:#001080">native</span><span style="color:#795e26"> % </span><span style="color:#098658">2</span><span style="color:#795e26"> == </span><span style="color:#098658">0</span></div>
<div class="cl" style="top:407.24px;left:1127.50px"><span style="color:#001080">self</span><span style="color:#000000">.</span><span style="color:#001080">games</span><span style="color:#0a2ed8">[</span><span style="color:#001080">game_id</span><span style="color:#0a2ed8">]</span><span style="color:#000000">.</span><span style="color:#001080">board</span><span style="color:#0a2ed8">[</span><span class="bpd"></span><span style="color:#001080">self</span><span style="color:#000000">.</span><span style="color:#795e26">coord_to_matrix_index</span><span style="color:#319331">(</span><span style="color:#001080">x</span><span style="color:#000000">, </span><span style="color:#001080">y</span><span style="color:#319331">)</span><span style="color:#0a2ed8">]</span><span style="color:#000000"> = </span><span class="bpd"></span><span style="color:#267f99">arc4</span><span style="color:#000000">.</span><span style="color:#267f99">Byte</span><span style="color:#0a2ed8">(</span></div>
<div class="cl" style="top:435.90px;left:1173.50px"><span style="color:#0070c1">HOST_MARK</span></div>
<div class="cl" style="top:464.56px;left:1127.50px"><span style="color:#0a2ed8">)</span></div>
<div class="cl" style="top:493.22px;left:1081.50px"><span style="color:#af00db">else</span><span style="color:#000000">:</span></div>
<div class="cl" style="top:521.88px;left:1127.50px"><span style="color:#af00db">assert</span><span style="color:#001080"> game</span><span style="color:#000000">.</span><span style="color:#001080">turns</span><span style="color:#000000">.</span><span style="color:#001080">native</span><span style="color:#795e26"> % </span><span style="color:#098658">2</span><span style="color:#795e26"> == </span><span style="color:#098658">1</span></div>
<div class="cl" style="top:550.54px;left:1127.50px"><span style="color:#001080">self</span><span style="color:#000000">.</span><span style="color:#001080">games</span><span style="color:#0a2ed8">[</span><span style="color:#001080">game_id</span><span style="color:#0a2ed8">]</span><span style="color:#000000">.</span><span style="color:#001080">board</span><span style="color:#0a2ed8">[</span><span class="bpd"></span><span style="color:#001080">self</span><span style="color:#000000">.</span><span style="color:#795e26">coord_to_matrix_index</span><span style="color:#319331">(</span><span style="color:#001080">x</span><span style="color:#000000">, </span><span style="color:#001080">y</span><span style="color:#319331">)</span><span style="color:#0a2ed8">]</span><span style="color:#000000"> = </span><span class="bpd"></span><span style="color:#267f99">arc4</span><span style="color:#000000">.</span><span style="color:#267f99">Byte</span><span style="color:#0a2ed8">(</span></div>
<div class="cl" style="top:579.20px;left:1173.50px"><span style="color:#0070c1">GUEST_MARK</span></div>
<div class="cl" style="top:607.86px;left:1127.50px"><span style="color:#0a2ed8">)</span></div>
<div class="cl" style="top:636.52px;left:989.50px"></div>
<div class="cl" style="top:665.18px;left:1081.50px"><span class="bpd"></span><span style="color:#001080">self</span><span style="color:#000000">.</span><span style="color:#001080">games</span><span style="color:#0a2ed8">[</span><span style="color:#001080">game_id</span><span style="color:#0a2ed8">]</span><span style="color:#000000">.</span><span style="color:#001080">turns</span><span style="color:#000000"> = </span><span class="bpd r"></span><span style="color:#267f99">arc4</span><span style="color:#000000">.</span><span style="color:#267f99">UInt8</span><span style="color:#0a2ed8">(</span></div>
<div class="cl" style="top:693.84px;left:1127.50px"><span style="color:#001080">self</span><span style="color:#000000">.</span><span style="color:#001080">games</span><span style="color:#319331">[</span><span style="color:#001080">game_id</span><span style="color:#319331">]</span><span style="color:#000000">.</span><span style="color:#001080">turns</span><span style="color:#000000">.</span><span style="color:#001080">native</span><span style="color:#795e26"> + </span><span class="bpd"></span><span style="color:#267f99">UInt64</span><span style="color:#319331">(</span><span style="color:#098658">1</span><span style="color:#319331">)</span></div>
<div class="cl" style="top:722.50px;left:1081.50px"><span style="color:#0a2ed8">)</span></div>
<div class="cl" style="top:751.16px;left:989.50px"></div>
<div class="cl" style="top:779.82px;left:1081.50px"><span style="color:#001080">is_over</span><span style="color:#000000">, </span><span style="color:#001080">is_draw</span><span style="color:#000000"> = </span><span style="color:#001080">self</span><span style="color:#000000">.</span><span style="color:#795e26">is_game_over</span><span style="color:#0a2ed8">(</span><span style="color:#001080">self</span><span style="color:#000000">.</span><span style="color:#001080">games</span><span style="color:#319331">[</span><span style="color:#001080">game_id</span><span style="color:#319331">]</span><span style="color:#000000">.</span><span style="color:#001080">board</span><span style="color:#000000">.</span><span style="color:#795e26">copy</span><span style="color:#319331">()</span><span style="color:#0a2ed8">)</span></div>
<div class="cl" style="top:808.48px;left:1081.50px"><span style="color:#af00db">if</span><span style="color:#001080"> is_over</span><span style="color:#000000">:</span></div>
<div class="cl" style="top:837.14px;left:1127.50px"><span style="color:#001080">self</span><span style="color:#000000">.</span><span style="color:#001080">games</span><span style="color:#0a2ed8">[</span><span style="color:#001080">game_id</span><span style="color:#0a2ed8">]</span><span style="color:#000000">.</span><span style="color:#001080">is_over</span><span style="color:#000000"> = </span><span style="color:#267f99">arc4</span><span style="color:#000000">.</span><span style="color:#267f99">Bool</span><span style="color:#0a2ed8">(</span><span style="color:#0b0be6">True</span><span style="color:#0a2ed8">)</span><span style="color:#008000">  # noqa: FBT003</span></div>
<div class="cl" style="top:865.80px;left:1127.50px"><span style="color:#001080">self</span><span style="color:#000000">.</span><span style="color:#001080">games_played</span><span style="color:#0a2ed8">[</span><span style="color:#001080">game</span><span style="color:#000000">.</span><span style="color:#001080">host</span><span style="color:#000000">.</span><span style="color:#001080">native</span><span style="color:#0a2ed8">]</span><span style="color:#795e26"> += </span><span class="bpd"></span><span style="color:#267f99">UInt64</span><span style="color:#0a2ed8">(</span><span style="color:#098658">1</span><span style="color:#0a2ed8">)</span></div>
<div class="cl" style="top:894.46px;left:1127.50px"><span class="bpd"></span><span style="color:#001080">self</span><span style="color:#000000">.</span><span style="color:#001080">games_played</span><span style="color:#0a2ed8">[</span><span class="bpd r"></span><span style="color:#001080">game</span><span style="color:#000000">.</span><span style="color:#001080">guest</span><span style="color:#000000">.</span><span style="color:#001080">native</span><span style="color:#0a2ed8">]</span><span style="color:#795e26"> += </span><span class="bpd"></span><span style="color:#267f99">UInt64</span><span style="color:#0a2ed8">(</span><span style="color:#098658">1</span><span style="color:#0a2ed8">)</span></div>
<div class="cl" style="top:923.12px;left:989.50px"></div>
<div class="cl" style="top:951.78px;left:1127.50px"><span style="color:#af00db">if</span><span style="color:#000000"> </span><span style="color:#0b0be6">not</span><span style="color:#001080"> is_draw</span><span style="color:#000000">:</span></div>
<div class="cl" style="top:980.44px;left:1173.50px"><span style="color:#001080">winner</span><span style="color:#000000"> = </span><span class="frm"><svg width="20" height="20" viewBox="0 0 20 20"><path d="M1 1 H10.8 L17.5 9.2 L10.8 17.4 H1 Z" fill="none" stroke="#c18a0a" stroke-width="2" stroke-linejoin="round"/></svg></span><span style="color:#001080">game</span><span style="color:#000000">.</span><span style="color:#001080">host</span><span style="color:#000000"> </span><span style="color:#af00db">if</span><span style="color:#001080"> is_host </span><span style="color:#af00db">else</span><span style="color:#001080"> game</span><span style="color:#000000">.</span><span style="color:#001080">guest</span></div>
<div class="cl" style="top:1009.10px;left:1173.50px"><span style="color:#001080">self</span><span style="color:#000000">.</span><span style="color:#001080">games_won</span><span style="color:#0a2ed8">[</span><span style="color:#001080">winner</span><span style="color:#000000">.</span><span style="color:#001080">native</span><span style="color:#0a2ed8">]</span><span style="color:#795e26"> += </span><span class="bpd"></span><span style="color:#267f99">UInt64</span><span style="color:#0a2ed8">(</span><span style="color:#098658">1</span><span style="color:#0a2ed8">)</span></div>
<div class="cl" style="top:1037.76px;left:989.50px"></div>
<div class="cl" style="top:1066.42px;left:1035.50px"><span style="color:#795e26">@</span><span style="color:#267f99">arc4</span><span style="color:#000000">.</span><span style="color:#795e26">baremethod</span><span style="color:#0a2ed8">(</span><span style="color:#001080">allow_actions</span><span style="color:#000000">=</span><span style="color:#319331">[</span><span style="color:#267f99">OnCompleteAction</span><span style="color:#000000">.</span><span style="color:#001080">CloseOut</span><span style="color:#319331">]</span><span style="color:#0a2ed8">)</span></div>
<div class="cl" style="top:1095.08px;left:1035.50px"><span style="color:#0b0be6">def</span><span style="color:#000000"> </span><span style="color:#795e26">close_out</span><span style="color:#0a2ed8">(</span><span style="color:#001080">self</span><span style="color:#0a2ed8">)</span><span style="color:#000000"> -&gt; </span><span style="color:#0b0be6">None</span><span style="color:#000000">:</span></div>
<div class="cl" style="top:1123.74px;left:1081.50px"><span style="color:#af00db">pass</span></div>
<div class="cl" style="top:1152.40px;left:989.50px"></div>
<div class="cl" style="top:1181.06px;left:1035.50px"><span style="color:#795e26">@subroutine</span></div>
<div class="cl" style="top:1209.72px;left:1035.50px"><span style="color:#0b0be6">def</span><span style="color:#000000"> </span><span style="color:#795e26">coord_to_matrix_index</span><span style="color:#0a2ed8">(</span><span style="color:#001080">self</span><span style="color:#000000">, </span><span style="color:#001080">x</span><span style="color:#000000">: </span><span style="color:#267f99">UInt64</span><span style="color:#000000">, </span><span style="color:#001080">y</span><span style="color:#000000">: </span><span style="color:#267f99">UInt64</span><span style="color:#0a2ed8">)</span><span style="color:#000000"> -&gt; </span><span style="color:#267f99">UInt64</span><span style="color:#000000">:</span></div>
<div class="cl" style="top:1238.38px;left:1081.50px"><span style="color:#af00db">return</span><span style="color:#000000"> </span><span style="color:#098658">3</span><span style="color:#000000"> </span><span style="position:relative;top:3px">*</span><span style="color:#000000"> </span><span style="color:#001080">y</span><span style="color:#795e26"> + </span><span style="color:#001080">x</span></div>
<div class="cl" style="top:1267.04px;left:989.50px"></div>
<div class="cl" style="top:1295.70px;left:1035.50px"><span style="color:#795e26">@subroutine</span></div>
<div class="cl" style="top:1324.36px;left:1035.50px"><span style="color:#0b0be6">def</span><span style="color:#000000"> </span><span style="color:#795e26">is_game_over</span><span style="color:#0a2ed8">(</span><span style="color:#001080">self</span><span style="color:#000000">, </span><span style="color:#001080">board</span><span style="color:#000000">: </span><span style="color:#001080">Board</span><span style="color:#0a2ed8">)</span><span style="color:#000000"> -&gt; </span><span style="color:#267f99">Tuple</span><span style="color:#0a2ed8">[</span><span style="color:#267f99">bool</span><span style="color:#000000">, </span><span style="color:#267f99">bool</span><span style="color:#0a2ed8">]</span><span style="color:#000000">:</span></div>
<div class="cl" style="top:1353.02px;left:1081.50px"><span style="color:#af00db">for</span><span style="color:#001080"> i </span><span style="color:#0b0be6">in</span><span style="color:#000000"> </span><span style="color:#267f99">urange</span><span style="color:#0a2ed8">(</span><span style="color:#098658">3</span><span style="color:#0a2ed8">)</span><span style="color:#000000">:</span></div>
<div class="cl" style="top:1381.68px;left:1127.50px"><span style="color:#008000"># Row check</span></div>
<div class="cl" style="top:980.44px;left:1789px;color:#c8c8b8">You, 2 minutes ago • Uncommitted changes</div>
<div class="ln" style="top:149.30px;color:#237893">109</div>
<div class="ln" style="top:177.96px;color:#237893">110</div>
<div class="ln" style="top:206.62px;color:#237893">111</div>
<div class="ln" style="top:235.28px;color:#237893">112</div>
<div class="ln" style="top:263.94px;color:#237893">113</div>
<div class="ln" style="top:292.60px;color:#237893">114</div>
<div class="ln" style="top:321.26px;color:#237893">115</div>
<div class="ln" style="top:349.92px;color:#237893">116</div>
<div class="ln" style="top:378.58px;color:#237893">117</div>
<div class="ln" style="top:407.24px;color:#237893">118</div>
<div class="ln" style="top:435.90px;color:#237893">119</div>
<div class="ln" style="top:464.56px;color:#237893">120</div>
<div class="ln" style="top:493.22px;color:#237893">121</div>
<div class="ln" style="top:521.88px;color:#237893">122</div>
<div class="ln" style="top:550.54px;color:#237893">123</div>
<div class="ln" style="top:579.20px;color:#237893">124</div>
<div class="ln" style="top:607.86px;color:#237893">125</div>
<div class="ln" style="top:636.52px;color:#237893">126</div>
<div class="ln" style="top:665.18px;color:#237893">127</div>
<div class="ln" style="top:693.84px;color:#237893">128</div>
<div class="ln" style="top:722.50px;color:#237893">129</div>
<div class="ln" style="top:751.16px;color:#237893">130</div>
<div class="ln" style="top:779.82px;color:#237893">131</div>
<div class="ln" style="top:808.48px;color:#237893">132</div>
<div class="ln" style="top:837.14px;color:#237893">133</div>
<div class="ln" style="top:865.80px;color:#237893">134</div>
<div class="ln" style="top:894.46px;color:#237893">135</div>
<div class="ln" style="top:923.12px;color:#237893">136</div>
<div class="ln" style="top:951.78px;color:#237893">137</div>
<div class="ln" style="top:980.44px;color:#0b216f">138</div>
<div class="ln" style="top:1009.10px;color:#237893">139</div>
<div class="ln" style="top:1037.76px;color:#237893">140</div>
<div class="ln" style="top:1066.42px;color:#237893">141</div>
<div class="ln" style="top:1095.08px;color:#237893">142</div>
<div class="ln" style="top:1123.74px;color:#237893">143</div>
<div class="ln" style="top:1152.40px;color:#237893">144</div>
<div class="ln" style="top:1181.06px;color:#237893">145</div>
<div class="ln" style="top:1209.72px;color:#237893">146</div>
<div class="ln" style="top:1238.38px;color:#237893">147</div>
<div class="ln" style="top:1267.04px;color:#237893">148</div>
<div class="ln" style="top:1295.70px;color:#237893">149</div>
<div class="ln" style="top:1324.36px;color:#237893">150</div>
<div class="ln" style="top:1353.02px;color:#237893">151</div>
<div class="ln" style="top:1381.68px;color:#237893">152</div>
<svg class="b" style="left:891.00px;top:413.77px;" width="14" height="14" viewBox="0 0 14 14"><circle cx="7" cy="7" r="6.1" fill="#e51400"/></svg>
<svg class="b" style="left:891.00px;top:557.07px;" width="14" height="14" viewBox="0 0 14 14"><circle cx="7" cy="7" r="6.1" fill="#e51400"/></svg>
<svg class="b" style="left:891.00px;top:671.71px;" width="14" height="14" viewBox="0 0 14 14"><circle cx="7" cy="7" r="6.1" fill="#e51400"/></svg>
<svg class="b" style="left:891.00px;top:700.37px;" width="14" height="14" viewBox="0 0 14 14"><circle cx="7" cy="7" r="6.1" fill="#e51400"/></svg>
<svg class="b" style="left:891.00px;top:843.67px;" width="14" height="14" viewBox="0 0 14 14"><circle cx="7" cy="7" r="6.1" fill="#e51400"/></svg>
<svg class="b" style="left:891.00px;top:872.33px;" width="14" height="14" viewBox="0 0 14 14"><circle cx="7" cy="7" r="6.1" fill="#e51400"/></svg>
<svg class="b" style="left:891.00px;top:900.99px;" width="14" height="14" viewBox="0 0 14 14"><circle cx="7" cy="7" r="6.1" fill="#e51400"/></svg>
<svg class="b" style="left:891.00px;top:1015.63px;" width="14" height="14" viewBox="0 0 14 14"><circle cx="7" cy="7" r="6.1" fill="#e51400"/></svg>
<svg class="b" style="left:888.50px;top:983.94px;" width="22" height="22" viewBox="0 0 22 22"><path d="M1.6 1.6 H11.5 L18.3 10.3 L11.5 19 H1.6 Z" fill="none" stroke="#c18a0a" stroke-width="2" stroke-linejoin="round"/></svg>
<div class="b" style="left:955.00px;top:146.50px;width:5.20px;height:1263.50px;background:repeating-linear-gradient(135deg, #2d72ba 0 1.3px, #ffffff 1.3px 3.36px)"></div>
<div class="b" style="left:884.00px;top:52.00px;width:1419.00px;height:36.00px;background:#fff"></div>
<div class="b" style="left:884.00px;top:89.00px;width:1419.00px;height:56.60px;background:#ffffff;box-shadow:0 2px 3px -1px rgba(0,0,0,0.2)"></div>
<div class="ln" style="top:89.00px;color:#237893">33</div>
<div class="ln" style="top:117.66px;color:#237893">106</div>
<div class="cl" style="top:89.00px;left:989.50px"><span style="color:#0b0be6">class</span> <span style="color:#267f99">TicTacToe</span><span style="color:#0a2ed8">(</span><span style="color:#267f99">ARC4Contract</span><span style="color:#0a2ed8">)</span>:</div>
<div class="cl" style="top:117.66px;left:1035.50px"><span style="color:#0b0be6">def</span> <span style="color:#795e26">move</span><span style="color:#0a2ed8">(</span><span style="color:#001080">self</span>, <span style="color:#001080">game_id</span>: <span style="color:#267f99">UInt64</span>, <span style="color:#001080">x</span>: <span style="color:#267f99">UInt64</span>, <span style="color:#001080">y</span>: <span style="color:#267f99">UInt64</span><span style="color:#0a2ed8">)</span> -&gt; <span style="color:#0b0be6">None</span>:</div>
<div class="t fs " style="left:912.00px;top:55.76px;font-size:20.6px;line-height:29px;color:#6f6f6f;font-weight:normal;font-style:normal;letter-spacing:0.809px;">tictactoe</div>
<svg class="b" style="left:1003.50px;top:61.50px;" width="11" height="17" viewBox="0 0 11 17"><path d="M1.5 1.2 L8.8 8.5 L1.5 15.8" fill="none" stroke="#6f6f6f" stroke-width="1.4"/></svg>
<div class="t fs " style="left:1021.00px;top:55.76px;font-size:20.6px;line-height:29px;color:#6f6f6f;font-weight:normal;font-style:normal;letter-spacing:0.664px;">smart_contracts</div>
<svg class="b" style="left:1184.50px;top:61.50px;" width="11" height="17" viewBox="0 0 11 17"><path d="M1.5 1.2 L8.8 8.5 L1.5 15.8" fill="none" stroke="#6f6f6f" stroke-width="1.4"/></svg>
<div class="t fs " style="left:1205.00px;top:55.76px;font-size:20.6px;line-height:29px;color:#6f6f6f;font-weight:normal;font-style:normal;letter-spacing:0.809px;">tictactoe</div>
<svg class="b" style="left:1299.50px;top:61.50px;" width="11" height="17" viewBox="0 0 11 17"><path d="M1.5 1.2 L8.8 8.5 L1.5 15.8" fill="none" stroke="#6f6f6f" stroke-width="1.4"/></svg>
<svg class="b" style="left:1321.00px;top:61.00px;" width="18" height="18" viewBox="0 0 18 18"><g transform="scale(1.1)"><g><path d="M8 1.2c-3.2 0-3 1.4-3 1.4v1.5h3.1v.5H3.7S1.6 4.4 1.6 7.7s1.8 3.2 1.8 3.2h1.1V9.4s-.1-1.8 1.8-1.8h3s1.7 0 1.7-1.7V2.9S11.3 1.2 8 1.2z" fill="#3e7aab"/><path d="M8.1 14.8c3.2 0 3-1.4 3-1.4v-1.5H8v-.5h4.4s2.1.2 2.1-3.1-1.8-3.2-1.8-3.2h-1.1v1.5s.1 1.8-1.8 1.8h-3S5.1 8.4 5.1 10.1v3s-.3 1.7 3 1.7z" fill="#5a9bc4"/><circle cx="6.3" cy="2.7" r=".55" fill="#fff"/><circle cx="9.8" cy="13.3" r=".55" fill="#fff"/></g></g></svg>
<div class="t fs " style="left:1350.50px;top:55.76px;font-size:20.6px;line-height:29px;color:#6f6f6f;font-weight:normal;font-style:normal;letter-spacing:0.795px;">contract.py</div>
<svg class="b" style="left:1469.50px;top:61.50px;" width="11" height="17" viewBox="0 0 11 17"><path d="M1.5 1.2 L8.8 8.5 L1.5 15.8" fill="none" stroke="#6f6f6f" stroke-width="1.4"/></svg>
<svg class="b" style="left:1486.00px;top:58.00px;" width="25" height="24" viewBox="0 0 25 24"><g fill="none" stroke="#e08a1e" stroke-width="1.6" stroke-linejoin="round"><rect x="3" y="2.5" width="5.5" height="9.5" rx="1" transform="rotate(45 5.75 7.25) translate(0 0)"/><rect x="16" y="9" width="4" height="7" rx="1" transform="rotate(45 18 12.5)"/><rect x="16" y="17" width="4" height="7" rx="1" transform="rotate(45 18 20.5)"/><path d="M8 10.5 V20.3 H15.5 M8 13.5 H15.5"/></g></svg>
<div class="t fs " style="left:1517.50px;top:55.76px;font-size:20.6px;line-height:29px;color:#6f6f6f;font-weight:normal;font-style:normal;letter-spacing:0.17px;">TicTacToe</div>
<svg class="b" style="left:1620.00px;top:61.50px;" width="11" height="17" viewBox="0 0 11 17"><path d="M1.5 1.2 L8.8 8.5 L1.5 15.8" fill="none" stroke="#6f6f6f" stroke-width="1.4"/></svg>
<svg class="b" style="left:1638.00px;top:58.00px;" width="22" height="24" viewBox="0 0 22 24"><g fill="none" stroke="#652d90" stroke-width="1.6" stroke-linejoin="round"><path d="M11 2 L20 7 V17 L11 22 L2 17 V7 Z"/><path d="M2 7 L11 12 L20 7 M11 12 V22"/></g></svg>
<div class="t fs " style="left:1668.00px;top:55.76px;font-size:20.6px;line-height:29px;color:#6f6f6f;font-weight:normal;font-style:normal;letter-spacing:0.156px;">move</div>
<div class="b" style="left:2303.00px;top:88.00px;width:13.00px;height:1322.00px;background:#ffffff;border-left:1px solid #e8e8e8;border-top:1px solid #e8e8e8;box-sizing:border-box"></div>
<div class="b" style="left:2303.50px;top:92.50px;width:7.00px;height:954.00px;background:#80b5e6"></div>
<div class="b" style="left:2303.50px;top:1053.00px;width:7.00px;height:79.00px;background:#8cc09a"></div>
<div class="b" style="left:2303.50px;top:1136.00px;width:7.00px;height:9.00px;background:#80b5e6"></div>
<div class="b" style="left:2303.00px;top:890.00px;width:13.00px;height:2.00px;background:#222"></div>
<div class="b" style="left:2303.50px;top:893.00px;width:13.00px;height:5.00px;background:#d7e8b0"></div>
<div class="b" style="left:606.60px;top:54.00px;width:368.40px;height:42.20px;background:#f3f3f3;border-radius:6px;box-shadow:0 2px 8px rgba(0,0,0,0.18);border:1px solid #e2e2e2;box-sizing:border-box"></div>
<div class="b" style="left:726.40px;top:57.40px;width:34.00px;height:34.40px;background:#e1e1e1;border-radius:6px"></div>
<svg class="b" style="left:620.00px;top:62.00px;" width="22" height="24" viewBox="0 0 22 24"><g fill="#b8b8b8"><rect x="4.3" y="4.2" width="3.6" height="3.6" rx="0.6"/><rect x="12.5" y="4.2" width="3.6" height="3.6" rx="0.6"/><rect x="4.3" y="10.8" width="3.6" height="3.6" rx="0.6"/><rect x="12.5" y="10.8" width="3.6" height="3.6" rx="0.6"/><rect x="4.3" y="17.4" width="3.6" height="3.6" rx="0.6"/><rect x="12.5" y="17.4" width="3.6" height="3.6" rx="0.6"/></g></svg>
<svg class="b" style="left:648.00px;top:62.00px;" width="28" height="24" viewBox="0 0 28 24"><path d="M5 3.5 V21.5" stroke="#1a70c5" stroke-width="2.4"/><path d="M12 4.5 L22.5 12.5 L12 20.5 Z" fill="none" stroke="#1a70c5" stroke-width="2.2" stroke-linejoin="round"/></svg>
<svg class="b" style="left:690.00px;top:60.00px;" width="26" height="28" viewBox="0 0 26 28"><g fill="none" stroke="#1a70c5" stroke-width="2.4"><path d="M5.5 14 A8 8 0 0 1 20.5 9.5"/><path d="M21 3.5 V10 H14.5"/></g><circle cx="12.6" cy="20.8" r="3.1" fill="#1a70c5"/></svg>
<svg class="b" style="left:731.00px;top:60.00px;" width="26" height="28" viewBox="0 0 26 28"><g fill="none" stroke="#1a70c5" stroke-width="2.4"><path d="M13 3.5 V16"/><path d="M7.5 10.5 L13 16 L18.5 10.5"/></g><circle cx="13" cy="22.8" r="3.1" fill="#1a70c5"/></svg>
<svg class="b" style="left:772.00px;top:60.00px;" width="26" height="28" viewBox="0 0 26 28"><g fill="none" stroke="#1a70c5" stroke-width="2.4"><path d="M13 5 V17"/><path d="M7.5 10.5 L13 5 L18.5 10.5"/></g><circle cx="13" cy="22.8" r="3.1" fill="#1a70c5"/></svg>
<svg class="b" style="left:813.00px;top:60.00px;" width="26" height="28" viewBox="0 0 26 28"><g fill="none" stroke="#1a70c5" stroke-width="2.4"><path d="M20.5 14 A8 8 0 0 0 5.5 9.5"/><path d="M5 3.5 V10 H11.5"/></g><circle cx="13.4" cy="20.8" r="3.1" fill="#1a70c5"/></svg>
<svg class="b" style="left:853.00px;top:62.00px;" width="28" height="24" viewBox="0 0 28 24"><path d="M23 3.5 V21.5" stroke="#1a70c5" stroke-width="2.4"/><path d="M16 4.5 L5.5 12.5 L16 20.5 Z" fill="none" stroke="#1a70c5" stroke-width="2.2" stroke-linejoin="round"/></svg>
<svg class="b" style="left:896.00px;top:61.00px;" width="28" height="28" viewBox="0 0 28 28"><g fill="none" stroke="#388a34" stroke-width="2.4"><path d="M6.2 8.5 A8.6 8.6 0 1 1 5 15"/><path d="M5.5 3.5 V9.5 H11.5"/></g></svg>
<svg class="b" style="left:939.00px;top:63.00px;" width="24" height="24" viewBox="0 0 24 24"><rect x="3.8" y="3.2" width="16" height="16.5" fill="none" stroke="#b4261a" stroke-width="2.5" rx="1"/></svg>
</body></html>
